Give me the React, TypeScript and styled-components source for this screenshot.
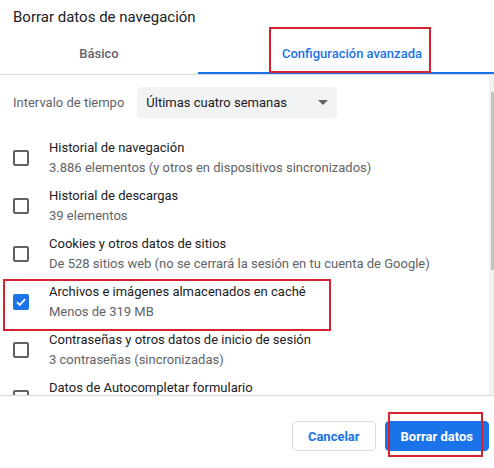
import React from "react";
import styled, { createGlobalStyle } from "styled-components";

const Global = createGlobalStyle`
  html, body { margin: 0; padding: 0; overflow: hidden; background: #fff; }
  body { font-family: Roboto, "Liberation Sans", sans-serif; }
  * { box-sizing: border-box; }
`;

const Dialog = styled.div`
  position: relative;
  width: 506px;
  height: 468px;
  display: flex;
  flex-direction: column;
  background: #fff;
`;

const Title = styled.h1`
  margin: 0;
  height: 33px;
  padding: 7px 13px 0;
  font-size: 15px;
  line-height: 20px;
  font-weight: 400;
  color: #202124;
`;

const TabBar = styled.div`
  display: flex;
  height: 42px;
  border-bottom: 1px solid #dadce0;
`;

const Tab = styled.div<{ $active?: boolean; $width?: number }>`
  ${(p) => (p.$width ? `width: ${p.$width}px;` : "flex: 1;")}
  display: flex;
  align-items: center;
  justify-content: center;
  padding-top: 2px;
  font-size: 13px;
  font-weight: 500;
  color: ${(p) => (p.$active ? "#1a73e8" : "#5f6368")};
  border-bottom: 2px solid ${(p) => (p.$active ? "#1a73e8" : "transparent")};
`;

const Body = styled.div`
  flex: 1;
  display: flex;
  min-height: 0;
`;

const Content = styled.div`
  flex: 1;
  overflow: hidden;
  padding: 12px 0 0 13px;
`;

const RangeRow = styled.div`
  display: flex;
  align-items: center;
  gap: 13px;
  margin-bottom: 16px;
`;

const RangeLabel = styled.span`
  font-size: 13px;
  color: #5f6368;
`;

const Select = styled.div`
  width: 200px;
  height: 31px;
  background: #f1f3f4;
  border-radius: 4px;
  display: flex;
  align-items: center;
  justify-content: space-between;
  padding: 0 9px;
  font-size: 13px;
  color: #202124;
`;

const Caret = styled.span`
  width: 0;
  height: 0;
  border-left: 5px solid transparent;
  border-right: 5px solid transparent;
  border-top: 5px solid #5f6368;
`;

const Row = styled.div`
  display: flex;
  align-items: center;
  gap: 20px;
  height: 48px;
`;

const Box = styled.span<{ $checked?: boolean }>`
  flex: none;
  width: 16px;
  height: 16px;
  border-radius: 2px;
  border: 2px solid ${(p) => (p.$checked ? "#1a73e8" : "#5f6368")};
  background: ${(p) => (p.$checked ? "#1a73e8" : "transparent")};
  display: flex;
  align-items: center;
  justify-content: center;
`;

const Texts = styled.div`
  display: flex;
  flex-direction: column;
`;

const RowTitle = styled.span`
  font-size: 13px;
  line-height: 20px;
  color: #202124;
`;

const RowSub = styled.span`
  min-height: 20px;
  font-size: 13px;
  line-height: 20px;
  color: #5f6368;
`;

const Scrollbar = styled.div`
  width: 17px;
  flex: none;
  background: #f1f1f1;
  display: flex;
  flex-direction: column;
`;

const ScrollBtn = styled.div<{ $down?: boolean }>`
  height: 17px;
  display: flex;
  align-items: center;
  justify-content: center;
  &::after {
    content: "";
    width: 0;
    height: 0;
    border-left: 4px solid transparent;
    border-right: 4px solid transparent;
    ${(p) => (p.$down ? "border-top: 4px solid #505050;" : "border-bottom: 4px solid #505050;")}
  }
`;

const Thumb = styled.div`
  height: 178px;
  margin: 0 2px;
  background: #c1c1c1;
`;

const Track = styled.div`
  flex: 1;
`;

const Footer = styled.div`
  height: 73px;
  border-top: 1px solid #dadce0;
  display: flex;
  justify-content: flex-end;
  align-items: flex-start;
  gap: 9px;
  padding: 25px 17px 0 0;
`;

const Button = styled.button<{ $primary?: boolean }>`
  height: 30px;
  padding: 0 ${(p) => (p.$primary ? 15 : 15)}px;
  border-radius: 4px;
  font-family: Roboto, "Liberation Sans", sans-serif;
  font-size: 13px;
  font-weight: 700;
  border: 1px solid ${(p) => (p.$primary ? "#1a73e8" : "#dadce0")};
  background: ${(p) => (p.$primary ? "#1a73e8" : "#fff")};
  color: ${(p) => (p.$primary ? "#fff" : "#1a73e8")};
`;

const Mark = styled.div<{ $x: number; $y: number; $w: number; $h: number }>`
  position: absolute;
  left: ${(p) => p.$x}px;
  top: ${(p) => p.$y}px;
  width: ${(p) => p.$w}px;
  height: ${(p) => p.$h}px;
  border: 2px solid #d42230;
  pointer-events: none;
`;

const items = [
  { t: "Historial de navegación", s: "3.886 elementos (y otros en dispositivos sincronizados)" },
  { t: "Historial de descargas", s: "39 elementos" },
  { t: "Cookies y otros datos de sitios", s: "De 528 sitios web (no se cerrará la sesión en tu cuenta de Google)" },
  { t: "Archivos e imágenes almacenados en caché", s: "Menos de 319 MB", checked: true },
  { t: "Contraseñas y otros datos de inicio de sesión", s: "3 contraseñas (sincronizadas)" },
  { t: "Datos de Autocompletar formulario", s: "" },
];

export default function App() {
  return (
    <>
      <Global />
      <Dialog>
        <Title>Borrar datos de navegación</Title>
        <TabBar>
          <Tab $width={198}>Básico</Tab>
          <Tab $active>Configuración avanzada</Tab>
        </TabBar>
        <Body>
          <Content>
            <RangeRow>
              <RangeLabel>Intervalo de tiempo</RangeLabel>
              <Select>
                <span>Últimas cuatro semanas</span>
                <Caret />
              </Select>
            </RangeRow>
            {items.map((it) => (
              <Row key={it.t}>
                <Box $checked={it.checked}>
                  {it.checked && (
                    <svg width="12" height="12" viewBox="0 0 12 12">
                      <path d="M2 6.2 L4.8 9 L10 3.2" fill="none" stroke="#fff" strokeWidth="1.8" />
                    </svg>
                  )}
                </Box>
                <Texts>
                  <RowTitle>{it.t}</RowTitle>
                  <RowSub>{it.s}</RowSub>
                </Texts>
              </Row>
            ))}
          </Content>
          <Scrollbar>
            <ScrollBtn />
            <Thumb />
            <Track />
            <ScrollBtn $down />
          </Scrollbar>
        </Body>
        <Footer>
          <Button>Cancelar</Button>
          <Button $primary>Borrar datos</Button>
        </Footer>
        <Mark $x={269} $y={27} $w={162} $h={46} />
        <Mark $x={3} $y={279} $w={328} $h={52} />
        <Mark $x={388} $y={412} $w={95} $h={45} />
      </Dialog>
    </>
  );
}
